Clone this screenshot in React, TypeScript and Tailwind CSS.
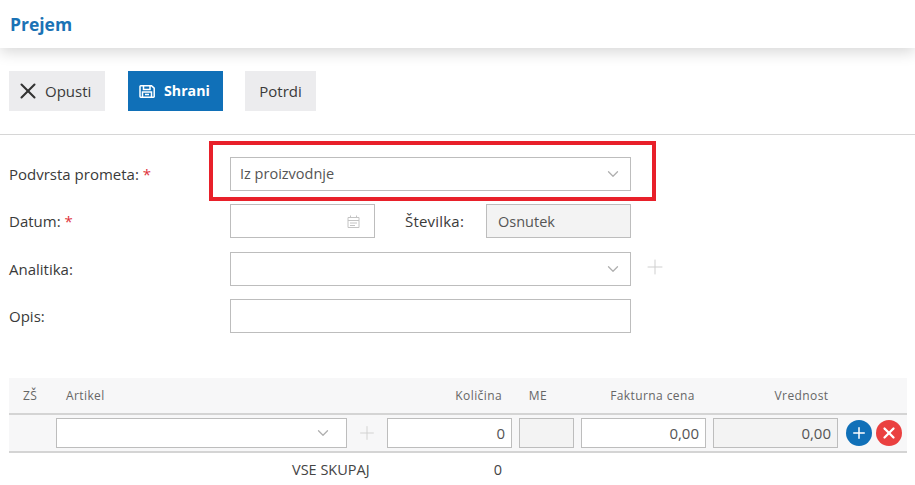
import React from 'react';
import { ChevronDown, Plus, X } from 'lucide-react';

function Chevron() {
  return <ChevronDown className="w-[18px] h-[18px] text-[#b0b0b0]" strokeWidth={1.75} />;
}

function FieldLabel({ text, required }: { text: string; required?: boolean }) {
  return (
    <div className="w-[221px] shrink-0 text-[15px] text-[#3a3a3a]">
      {text}
      {required && <span className="text-[#e0323c]"> *</span>}
    </div>
  );
}

export default function App() {
  return (
    <div className="w-[915px] h-[485px] overflow-hidden bg-white text-[#3a3a3a] font-['Open_Sans',sans-serif]">
      {/* Header */}
      <header className="h-[48px] pl-[10px] pt-[1px] flex items-center bg-white shadow-[0_4px_14px_rgba(0,0,0,0.16)]">
        <h1 className="text-[17.5px] font-bold text-[#1a72b5]">Prejem</h1>
      </header>

      {/* Toolbar */}
      <div className="h-[87px] pl-[9px] pt-[23px] border-b border-[#d6d6d6] flex items-start">
        <button className="w-[96px] h-[40px] flex items-center pl-[6px] bg-[#ececee] text-[15px] text-[#3a3a3a]">
          <X className="w-[26px] h-[26px] mr-[4px] text-[#333333]" strokeWidth={1.9} />
          Opusti
        </button>
        <button className="ml-[23px] w-[95px] h-[40px] flex items-center pl-[11px] bg-[#1070b8] text-[14.2px] font-bold text-white">
          <svg className="w-[16px] h-[13px] mr-[9px]" viewBox="0 0 16 13" fill="none" stroke="currentColor" strokeWidth="1.5">
            <path d="M1 1.5a.7.7 0 0 1 .7-.7h10.8l2.7 2.4v8.3a.7.7 0 0 1-.7.7h-12.8a.7.7 0 0 1-.7-.7z" />
            <path d="M4.5 1v3.5h6.5v-3.5M3.5 12v-5h9v5M6 9.5h4" />
          </svg>
          Shrani
        </button>
        <button className="ml-[22px] w-[71px] h-[40px] bg-[#ececee] text-[15px] text-[#3a3a3a]">Potrdi</button>
      </div>

      {/* Form */}
      <div className="pl-[9px] pt-[22px] w-[700px]">
        <div className="flex items-center h-[34px]">
          <FieldLabel text="Podvrsta prometa:" required />
          <div className="relative w-[401px] h-[34px] border border-[#bdbdbd] pl-[9px] pr-[8px] flex items-center justify-between text-[14.5px] text-[#555555]">
            Iz proizvodnje
            <Chevron />
            <div className="absolute left-[-22px] right-[-26px] top-[-17px] bottom-[-11px] border-[4px] border-[#e8202a]" />
          </div>
        </div>

        <div className="flex items-center h-[34px] mt-[13px]">
          <FieldLabel text="Datum:" required />
          <div className="w-[145px] h-[34px] border border-[#bdbdbd] pr-[14px] flex items-center justify-end">
            <svg className="w-[13px] h-[13px] text-[#c4c4c4]" viewBox="0 0 13 13" fill="none" stroke="currentColor" strokeWidth="1">
              <path d="M1 2.5h11v10h-11zM1 5.5h11M3.5 0.5v2M9.5 0.5v2M3 8h7M3 10.5h5" />
            </svg>
          </div>
          <div className="w-[111px] pl-[30px] shrink-0 text-[15px] font-medium tracking-[0.2px] text-[#3a3a3a]">Številka:</div>
          <div className="w-[145px] h-[34px] border border-[#bdbdbd] bg-[#f3f3f3] pl-[11px] pt-[1px] flex items-center text-[14.5px] text-[#555555]">
            Osnutek
          </div>
        </div>

        <div className="flex items-center h-[34px] mt-[14px]">
          <FieldLabel text="Analitika:" />
          <div className="w-[401px] h-[34px] border border-[#bdbdbd] pr-[8px] flex items-center justify-end">
            <Chevron />
          </div>
          <Plus className="ml-[12px] mb-[4px] w-[24px] h-[24px] text-[#cfcfcf]" strokeWidth={1} />
        </div>

        <div className="flex items-center h-[34px] mt-[13px]">
          <FieldLabel text="Opis:" />
          <div className="w-[401px] h-[34px] border border-[#bdbdbd]" />
        </div>
      </div>

      {/* Items table */}
      <div className="ml-[9px] w-[898px] mt-[45px] text-[12px] text-[#666666] tracking-[0.4px]">
        <div className="h-[37px] bg-[#f7f7f8] border-b-2 border-[#d4d4d4] flex items-center">
          <div className="w-[47px] pl-[14px] shrink-0">ZŠ</div>
          <div className="w-[378px] pl-[10px] shrink-0">Artikel</div>
          <div className="w-[68px] text-right shrink-0">Količina</div>
          <div className="w-[72px] text-center shrink-0">ME</div>
          <div className="w-[125px] text-center shrink-0 ml-[16px]">Fakturna cena</div>
          <div className="w-[125px] text-center shrink-0 ml-[24px]">Vrednost</div>
        </div>

        <div className="h-[38px] bg-[#f7f7f8] border-b-2 border-[#d4d4d4] flex items-center text-[15px] tracking-normal">
          <div className="ml-[47px] w-[291px] h-[30px] bg-white border border-[#bdbdbd] pr-[14px] flex items-center justify-end">
            <Chevron />
          </div>
          <div className="w-[40px] flex justify-center">
            <Plus className="w-[22px] h-[22px] text-[#cfcfcf]" strokeWidth={1} />
          </div>
          <div className="w-[125px] h-[30px] bg-white border border-[#bdbdbd] pr-[6px] flex items-center justify-end text-[#555555]">0</div>
          <div className="ml-[7px] w-[55px] h-[30px] bg-[#f3f3f3] border border-[#bdbdbd]" />
          <div className="ml-[7px] w-[125px] h-[30px] bg-white border border-[#bdbdbd] pr-[6px] flex items-center justify-end text-[#555555]">0,00</div>
          <div className="ml-[7px] w-[125px] h-[30px] bg-[#f3f3f3] border border-[#bdbdbd] pr-[6px] flex items-center justify-end text-[#555555]">0,00</div>
          <div className="ml-[8px] w-[26px] h-[26px] rounded-full bg-[#1070b8] flex items-center justify-center">
            <Plus className="w-[18px] h-[18px] text-white" strokeWidth={2} />
          </div>
          <div className="ml-[4px] w-[26px] h-[26px] rounded-full bg-[#ea4040] flex items-center justify-center">
            <X className="w-[18px] h-[18px] text-white" strokeWidth={3} />
          </div>
        </div>

        <div className="flex items-center h-[34px] text-[14.5px] text-[#444444] tracking-normal">
          <div className="ml-[283px] w-[210px] shrink-0">VSE SKUPAJ</div>
          <div className="w-[0px] flex justify-end">0</div>
        </div>
      </div>
    </div>
  );
}
